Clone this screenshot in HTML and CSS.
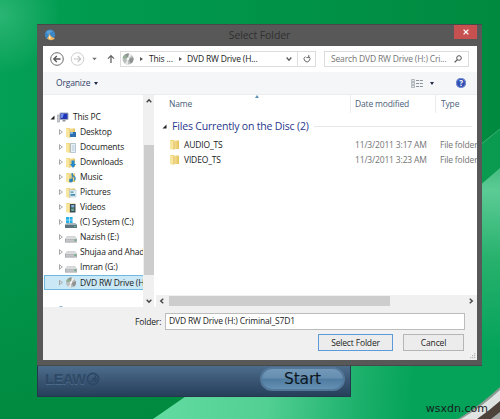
FILE: index.html
```
<!DOCTYPE html>
<html lang="en">
<head>
    <meta charset="UTF-8">
    <meta name="viewport" content="width=device-width, initial-scale=1.0">
    <title>Select Folder</title>
    <link rel="stylesheet" href="styles.css">
</head>
<body>
    <svg class="wallpaper" viewBox="0 0 500 419">
        <defs>
            <linearGradient id="base" x1="0" y1="0" x2="1" y2="0">
                <stop offset="0" stop-color="#04a055"/>
                <stop offset=".2" stop-color="#009a4e"/>
                <stop offset="1" stop-color="#008a40"/>
            </linearGradient>
            <linearGradient id="fold" gradientUnits="userSpaceOnUse" x1="150" y1="400" x2="410" y2="419">
                <stop offset="0" stop-color="#63dca2"/>
                <stop offset=".45" stop-color="#52cf92"/>
                <stop offset=".8" stop-color="#1cb06b"/>
                <stop offset="1" stop-color="#05a35a"/>
            </linearGradient>
            <linearGradient id="side" gradientUnits="userSpaceOnUse" x1="0" y1="168" x2="0" y2="350">
                <stop offset="0" stop-color="#45bc80"/>
                <stop offset=".12" stop-color="#5ccb95"/>
                <stop offset=".5" stop-color="#27b16d"/>
                <stop offset="1" stop-color="#05a35a"/>
            </linearGradient>
            <radialGradient id="corner" gradientUnits="userSpaceOnUse" cx="0" cy="15" r="60">
                <stop offset="0" stop-color="#2ab473"/>
                <stop offset="1" stop-color="#2ab473" stop-opacity="0"/>
            </radialGradient>
            <linearGradient id="dark" x1="0" y1="0" x2="0" y2="1">
                <stop offset=".3" stop-color="#008a40" stop-opacity="0"/>
                <stop offset="1" stop-color="#008a40"/>
            </linearGradient>
        </defs>
        <rect width="500" height="419" fill="url(#base)"/>
        <rect width="250" height="419" fill="url(#dark)"/>
        <rect width="80" height="80" fill="url(#corner)"/>
        <path d="M153 419L192 392 340 300H500V419z" fill="url(#fold)"/>
        <path d="M470 153L500 129V200H470z" fill="#0a9a50"/>
        <path d="M480 145L500 129" stroke="#3fae75"/>
        <path d="M470 194L500 168V350H470z" fill="url(#side)"/>
        <path d="M458 419Q482 404 500 387V419z" fill="#8d9a94"/>
        <path d="M461 419Q483 406 500 390V419z" fill="#dfe4e3"/>
        <path d="M477 419Q490 410 500 401V419z" fill="#4d433a"/>
        <path d="M491 419L500 412V419z" fill="#a5aaa8"/>
    </svg>

    <div class="desktop">
        <div class="window">
            <div class="titlebar">
                <svg class="app-icon" viewBox="0 0 12 12">
                    <circle cx="6" cy="5.6" r="5.2" fill="#3d86c6"/>
                    <path d="M2 3Q5 0 9 2 6 3 5 6z" fill="#5a9fd6"/>
                    <path d="M3 9.500Q5 8 5 5l3 3 3 1.500Q7 13 3 9.500z" fill="#f3b45a"/>
                    <path d="M5 6l2 3-2 1z" fill="#fff0cf"/>
                </svg>
                <span class="title">Select Folder</span>
                <div class="close">
                    <svg viewBox="0 0 6 6"><path d="M.6.6l4.800 4.800M5.400.6L.6 5.400" stroke="#fff" stroke-width="1.300"/></svg>
                </div>
            </div>

            <div class="content">
                <div class="address-row">
                    <svg class="nav" viewBox="0 0 70 16">
                        <g fill="none">
                            <circle cx="7" cy="8" r="6.300" stroke="#6c6c6c"/>
                            <path d="M10.500 8H4M6.800 5L3.800 8l3 3" stroke="#555" stroke-width="1.300"/>
                            <circle cx="27.500" cy="8" r="6.300" stroke="#cfcfcf"/>
                            <path d="M24 8h6.500M27.700 5l3 3-3 3" stroke="#c4c4c4" stroke-width="1.200"/>
                            <path d="M61 12V5M58 7.600L61 4.600l3 3" stroke="#666" stroke-width="1.300"/>
                        </g>
                        <path d="M42.200 6.700h4.600L44.500 9.200z" fill="#707070"/>
                    </svg>
                    <div class="address">
                        <svg class="disc" viewBox="0 0 12 12"><use href="#icon-disc"/></svg>
                        <i class="crumb"></i>
                        <span class="crumb-this">This ...</span>
                        <i class="crumb"></i>
                        <span class="crumb-drive">DVD RW Drive (H...</span>
                        <svg class="drop" viewBox="0 0 6 6"><path d="M.7 1.500L3 4.300 5.300 1.500" fill="none" stroke="#555" stroke-width="1.300"/></svg>
                        <div class="refresh">
                            <svg viewBox="0 0 8 8"><path d="M5.600 1.500A2.900 2.900 0 1 1 2.300 1.600M5.800 0v2.600H3.400" fill="none" stroke="#666"/></svg>
                        </div>
                    </div>
                    <div class="search">
                        <span>Search DVD RW Drive (H:) Cri...</span>
                        <svg viewBox="0 0 8 8"><circle cx="5" cy="3" r="2.300" fill="none" stroke="#555"/><path d="M3.400 4.600L.6 7.400" stroke="#555" stroke-width="1.300"/></svg>
                    </div>
                </div>

                <div class="toolbar">
                    <span class="organize">Organize</span>
                    <i class="caret"></i>
                    <svg class="view-icon" viewBox="0 0 12 9">
                        <path d="M.5.5h3v2h-3zM.5 3.500h3v2h-3zM.5 6.500h3v2h-3z" fill="#e4e7ec" stroke="#9ba1ab" stroke-width=".7"/>
                        <path d="M5 1.500h7M5 4.500h7M5 7.500h7" stroke="#8c929c" stroke-dasharray="3 .8"/>
                    </svg>
                    <i class="caret"></i>
                    <span class="help">?</span>
                </div>

                <div class="panes">
                    <div class="tree">
                        <ul>
                            <li class="root">
                                <svg class="open" viewBox="0 0 5 5"><path d="M4.500.5v4H.5z" fill="#222"/></svg>
                                <svg class="icon" viewBox="0 0 12 11"><path d="M0 3h2.500v7H0z" fill="#c9ccd1" stroke="#8a8e96" stroke-width=".5"/><path d="M3 1h8v6.500H3z" fill="#1f35b5" stroke="#a3a9bb"/><path d="M4 2l3-.5L5.500 6H4z" fill="#6f8cf0"/><path d="M5.500 8h3v1.500h-3z" fill="#8d929c"/></svg>
                                <span>This PC</span>
                            </li>
                            <li><i class="closed"></i><svg class="icon" viewBox="0 0 12 11"><use href="#icon-folder"/><path d="M5 5h6v5H5z" fill="#2e6fb0"/><path d="M5 5h3v2H5z" fill="#7eb3dd"/></svg><span>Desktop</span></li>
                            <li><i class="closed"></i><svg class="icon" viewBox="0 0 12 11"><use href="#icon-folder"/><path d="M5.500 1.500h5v9h-5z" fill="#e9f1f7" stroke="#91a8b9" stroke-width=".6"/><path d="M7 4h2.500M7 6h2.500M7 8h2.500" stroke="#8fabc2" stroke-width=".6"/></svg><span>Documents</span></li>
                            <li><i class="closed"></i><svg class="icon" viewBox="0 0 12 11"><use href="#icon-folder"/><path d="M6.500 3.500h3V7H11l-3 4-3-4h1.500z" fill="#2389cf"/></svg><span>Downloads</span></li>
                            <li><i class="closed"></i><svg class="icon" viewBox="0 0 12 11"><use href="#icon-folder"/><path d="M7 1.500q0 2 2 3t.5 4" fill="none" stroke="#2b83bd" stroke-width="1.200"/><circle cx="6" cy="8.500" r="1.900" fill="#2b83bd"/><path d="M7.200 1v7.500" stroke="#2b83bd"/></svg><span>Music</span></li>
                            <li><i class="closed"></i><svg class="icon" viewBox="0 0 12 11"><use href="#icon-folder"/><path d="M4.500 3h6.500v7H4.500z" fill="#e1f0f7" stroke="#9db7c4" stroke-width=".5"/><path d="M5.500 4.500h3v1.300h-3zM5.500 7h4.500v1.800H5.500z" fill="#448ba8"/></svg><span>Pictures</span></li>
                            <li><i class="closed"></i><svg class="icon" viewBox="0 0 12 11"><use href="#icon-folder"/><path d="M5 2h5.500v8.500H5z" fill="#3a4a55"/><path d="M6.200 3h3v2.500h-3z" fill="#7fb5d6"/><path d="M6.200 6.500h3V9h-3z" fill="#69a58f"/></svg><span>Videos</span></li>
                            <li><i class="closed"></i><svg class="icon" viewBox="0 0 12 11"><path d="M1 0h3v2.700H1zM4.600 0h3v2.700h-3zM1 3.300h3V6H1zM4.600 3.300h3V6h-3z" fill="#22b0e6"/><path d="M1.500 6.500h9L12 8v3H0V8z" fill="#5c7480"/><path d="M1.500 6.500h9L12 8H0z" fill="#9fb1b9"/><circle cx="10" cy="9.500" r=".7" fill="#5fe08c"/></svg><span>(C) System (C:)</span></li>
                            <li><i class="closed"></i><svg class="icon" viewBox="0 0 12 11"><use href="#icon-drive"/></svg><span>Nazish (E:)</span></li>
                            <li><i class="closed"></i><svg class="icon" viewBox="0 0 12 11"><use href="#icon-drive"/></svg><span>Shujaa and Ahad</span></li>
                            <li><i class="closed"></i><svg class="icon" viewBox="0 0 12 11"><use href="#icon-drive"/></svg><span>Imran (G:)</span></li>
                            <li class="selected"><i class="closed"></i><svg class="icon" viewBox="0 0 12 12"><use href="#icon-disc"/></svg><span>DVD RW Drive (H</span></li>
                        </ul>
                        <svg class="network" viewBox="0 0 6 2"><path d="M0 2Q3-1.500 6 2z" fill="#3b82b5"/></svg>
                    </div>
                    <div class="vscroll">
                        <svg viewBox="0 0 6 6"><path d="M.7 4.300L3 1.700l2.300 2.600" fill="none" stroke="#444" stroke-width="1.400"/></svg>
                        <div class="thumb"></div>
                        <svg viewBox="0 0 6 6"><path d="M.7 1.700L3 4.300l2.300-2.600" fill="none" stroke="#444" stroke-width="1.400"/></svg>
                    </div>

                    <div class="files">
                        <div class="columns">
                            <span class="col-name">Name</span>
                            <span class="col-date">Date modified</span>
                            <span class="col-type">Type</span>
                            <i class="sort"></i>
                        </div>
                        <div class="group">
                            <svg class="open" viewBox="0 0 5 5"><path d="M4.500.5v4H.5z" fill="#222"/></svg>
                            <span>Files Currently on the Disc (2)</span>
                            <hr>
                        </div>
                        <div class="file">
                            <svg class="icon" viewBox="0 0 12 11"><use href="#icon-folder"/></svg>
                            <span class="file-name">AUDIO_TS</span>
                            <span class="file-date">11/3/2011 3:17 AM</span>
                            <span class="file-type">File folder</span>
                        </div>
                        <div class="file">
                            <svg class="icon" viewBox="0 0 12 11"><use href="#icon-folder"/></svg>
                            <span class="file-name">VIDEO_TS</span>
                            <span class="file-date">11/3/2011 3:23 AM</span>
                            <span class="file-type">File folder</span>
                        </div>
                        <div class="hscroll">
                            <svg viewBox="0 0 6 6"><path d="M4.300.7L1.700 3l2.600 2.300" fill="none" stroke="#444" stroke-width="1.400"/></svg>
                            <div class="thumb"></div>
                            <svg viewBox="0 0 6 6"><path d="M1.700.7L4.300 3 1.700 5.300" fill="none" stroke="#444" stroke-width="1.400"/></svg>
                        </div>
                    </div>
                </div>

                <div class="footer">
                    <div class="folder-row">
                        <span class="label">Folder:</span>
                        <div class="input">DVD RW Drive (H:) Criminal_S7D1</div>
                    </div>
                    <div class="buttons">
                        <button class="primary">Select Folder</button>
                        <button class="cancel">Cancel</button>
                    </div>
                    <svg class="grip" viewBox="0 0 6 6"><path d="M4 0h1.300v1.300H4zM2 2h1.300v1.300H2zM4 2h1.300v1.300H4zM0 4h1.300v1.300H0zM2 4h1.300v1.300H2zM4 4h1.300v1.300H4z" fill="#bbb"/></svg>
                </div>
            </div>
        </div>

        <div class="player">
            <div class="brand">
                <span>LEAW</span>
                <svg viewBox="0 0 14 14"><circle cx="7" cy="7" r="5.600" fill="none" stroke="#2b4765" stroke-width="1.600"/><path d="M4 9.500Q9 9 9.500 3.500M6 6.500h5M8 10l3-3" fill="none" stroke="#2b4765" stroke-width="1.300"/></svg>
            </div>
            <div class="start">Start</div>
        </div>
    </div>
    <span class="watermark">wsxdn.com</span>

    <svg class="defs">
        <defs>
            <linearGradient id="gold"><stop stop-color="#f9e7a2"/><stop offset="1" stop-color="#e3c05a"/></linearGradient>
            <g id="icon-folder">
                <path d="M1 1h4v9H1z" fill="#eed27b"/>
                <path d="M4.500 1.500h5.500v8.500H4.500z" fill="url(#gold)"/>
                <path d="M1 1l4 1.500v8.500l-4-1z" fill="#f8e59e"/>
                <path d="M5 2.500v8" stroke="#cfa640" stroke-width=".6"/>
            </g>
            <g id="icon-drive">
                <path d="M2 4.500h8L12 7v3.500H0V7z" fill="#999c9e"/>
                <path d="M2 4.500h8L12 7H0z" fill="#d9dbdc"/>
                <path d="M.5 7.300h11v2.500H.5z" fill="#c3c6c8"/>
                <path d="M9.500 7.500h1.300v1.500H9.500z" fill="#48a868"/>
            </g>
            <g id="icon-disc">
                <circle cx="6" cy="6" r="5.500" fill="#b9bdbb"/>
                <path d="M6 6L3 1.400A5.500 5.500 0 0 1 7 .6z" fill="#8c938e"/>
                <path d="M6 6l5.300-1.500A5.500 5.500 0 0 1 9 10.500z" fill="#8e9292"/>
                <path d="M6 6L.6 5A5.500 5.500 0 0 1 3 1.400z" fill="#8fae93"/>
                <path d="M6 6l1-5.400 3 1.600z" fill="#eef0ef"/>
                <path d="M6 6L3 10.600l3 .9z" fill="#e6e8e7"/>
                <circle cx="6" cy="6" r="1.400" fill="#f6f6f6"/>
            </g>
        </defs>
    </svg>
</body>
</html>
```

FILE: styles.css
```
* {
    box-sizing: border-box;
}
body {
    margin: 0;
    width: 500px;
    height: 419px;
    position: relative;
    overflow: hidden;
    font-family: 'Open Sans', 'Noto Sans', sans-serif;
    font-size: 8.5px;
    letter-spacing: -0.16px;
    line-height: 14px;
    color: #222;
    white-space: nowrap;
}
svg {
    display: block;
    flex: none;
}
ul {
    list-style: none;
    margin: 0;
    padding: 0;
}
.wallpaper {
    position: absolute;
    inset: 0;
    width: 500px;
    height: 419px;
}
.defs {
    position: absolute;
    width: 0;
    height: 0;
}
.desktop {
    position: relative;
    padding: 24px 18px 0 37px;
}

/* dialog */
.window {
    height: 342px;
    padding: 0 5px 5px 6px;
    background: #585858;
    border: 1px solid #484848;
    border-width: 1px 0 1px 0;
}
.titlebar {
    height: 21px;
    display: flex;
    align-items: flex-start;
}
.app-icon {
    width: 12px;
    height: 12px;
    margin: 4px 0 0 1px;
}
.title {
    flex: 1;
    margin-top: 2px;
    padding-left: 9px;
    text-align: center;
    font-size: 10.5px;
    letter-spacing: -0.1px;
    line-height: 16px;
    color: #303030;
}
.close {
    width: 23px;
    height: 14px;
    background: #c75050;
    display: flex;
    align-items: center;
    justify-content: center;
}
.close svg {
    width: 6px;
    height: 6px;
}
.content {
    height: 314px;
    background: #fff;
    overflow: hidden;
    display: flex;
    flex-direction: column;
}
.address-row {
    height: 26px;
    display: flex;
    align-items: center;
    padding-left: 7px;
}
.nav {
    width: 70px;
    height: 16px;
}
.address {
    width: 196px;
    height: 16px;
    border: 1px solid #dcdcdc;
    display: flex;
    align-items: center;
}
.disc {
    width: 12px;
    height: 12px;
    margin: 0 6px 1px 1px;
}
.crumb {
    border: 2px solid transparent;
    border-left: 3px solid #555;
    border-right: 0;
}
.crumb-this {
    width: 25px;
    margin: 0 5px 0 6px;
}
.crumb-drive {
    flex: 1;
    margin-left: 5px;
}
.drop {
    width: 6px;
    height: 6px;
    margin-right: 5px;
}
.refresh {
    width: 18px;
    height: 14px;
    border-left: 1px solid #e0e0e0;
    display: flex;
    align-items: center;
    justify-content: center;
}
.refresh svg {
    width: 8px;
    height: 8px;
}
.search {
    width: 145px;
    height: 16px;
    margin-left: 8px;
    padding: 0 6px;
    border: 1px solid #dcdcdc;
    display: flex;
    align-items: center;
    justify-content: space-between;
    color: #757575;
}
.search svg {
    width: 8px;
    height: 8px;
}
.toolbar {
    height: 23px;
    padding-left: 13px;
    background: #f5f6f7;
    border-bottom: 1px solid #ebecee;
    display: flex;
    align-items: center;
    color: #33426b;
}
.organize {
    width: 34px;
}
.caret {
    margin-left: 4px;
    border: 2.5px solid transparent;
    border-top: 3px solid #1e2c4c;
    border-bottom: 0;
}
.view-icon {
    width: 12px;
    height: 9px;
    margin-left: auto;
    margin-right: 3px;
}
.help {
    width: 10px;
    height: 10px;
    margin: 0 11px 0 22px;
    border-radius: 50%;
    background: #3150b4;
    box-shadow: inset 0 0 0 1px #7d93d4;
    color: #fff;
    font-size: 8px;
    font-weight: bold;
    line-height: 10px;
    text-align: center;
}

/* folder tree */
.panes {
    height: 212px;
    display: flex;
}
.tree {
    width: 100px;
    padding: 15px 0 0 1px;
    overflow: hidden;
}
.tree li {
    height: 15px;
    display: flex;
    align-items: center;
    padding: 0 0 1px 15px;
}
.tree .root {
    padding-left: 6px;
}
.open {
    width: 5px;
    height: 5px;
}
.icon {
    width: 12px;
    height: 11px;
    margin: 0 3px 0 2px;
}
.root .icon {
    margin-right: 4px;
}
.closed {
    flex: none;
    width: 4px;
    height: 6px;
    background: #a6a6a6;
    clip-path: polygon(0 0, 100% 50%, 0 100%, 0 0, 25% 28%, 25% 72%, 70% 50%, 25% 28%);
}
.tree .selected {
    padding: 0 0 0 14px;
    background: #cbe8f6;
    border: 1px solid #6fb9de;
    border-right: 0;
}
.network {
    width: 6px;
    height: 2px;
    margin: 16px 0 0 14px;
}
.vscroll {
    width: 11px;
    background: #f0f0f0;
    display: flex;
    flex-direction: column;
    align-items: center;
    justify-content: space-between;
    padding: 3px 0;
    margin-right: 2px;
}
.vscroll svg, .hscroll svg {
    width: 6px;
    height: 6px;
}
.vscroll .thumb {
    width: 10px;
    height: 130px;
    margin-top: 18px;
    background: #cdcdcd;
}

/* file list */
.files {
    flex: 1;
    min-width: 0;
    display: flex;
    flex-direction: column;
    overflow: hidden;
}
.columns {
    position: relative;
    height: 18px;
    display: flex;
    line-height: 18px;
    color: #4c607a;
}
.col-name {
    width: 194px;
    padding-left: 13px;
}
.col-date {
    width: 85px;
    padding-left: 4px;
    border-left: 1px solid #ececec;
}
.col-type {
    padding-left: 5px;
    border-left: 1px solid #ececec;
}
.sort {
    position: absolute;
    left: 99px;
    top: 0;
    border: 2.5px solid transparent;
    border-bottom: 3px solid #5c93b5;
    border-top: 0;
}
.group {
    height: 24px;
    margin-top: 1px;
    display: flex;
    align-items: center;
    padding-left: 6px;
    font-size: 10.5px;
    letter-spacing: -0.18px;
    color: #27388c;
}
.group span {
    width: 137px;
    margin-left: 5px;
}
.group hr {
    width: 158px;
    margin: 0 0 0 5px;
    border: 0;
    border-top: 1px solid #e8e8e8;
}
.file {
    position: relative;
    height: 15px;
    display: flex;
    align-items: center;
    padding: 0 0 2px 11px;
}
.file-name, .file-date, .file-type {
    flex: none;
}
.file-name {
    width: 171px;
}
.file-date, .file-type {
    color: #737373;
}
.file-date {
    width: 85px;
}
.hscroll {
    height: 12px;
    margin: auto 0 0;
    padding: 0 3px;
    background: #f0f0f0;
    display: flex;
    align-items: center;
}
.hscroll .thumb {
    width: 221px;
    height: 10px;
    margin: 0 auto 0 4px;
    background: #cdcdcd;
}

/* bottom of the dialog */
.footer {
    position: relative;
    flex: 1;
    padding-top: 6px;
    background: #f0f0f0;
}
.folder-row {
    display: flex;
    align-items: center;
}
.label {
    width: 122px;
    padding-left: 92px;
}
.input {
    width: 300px;
    height: 17px;
    padding-left: 3px;
    background: #fff;
    border: 1px solid #bcbcbc;
}
.buttons {
    display: flex;
    margin: 4px 0 0 275px;
    gap: 10px;
}
button {
    height: 17px;
    padding: 0;
    font: inherit;
    letter-spacing: inherit;
    color: #222;
    background: #ececec;
    border: 1px solid #b5b5b5;
}
.primary {
    width: 75px;
    border-color: #5b9bdc;
}
.cancel {
    width: 61px;
}
.grip {
    position: absolute;
    right: 1px;
    bottom: 1px;
    width: 6px;
    height: 6px;
}

/* player bar behind the dialog */
.player {
    width: 314px;
    height: 31px;
    padding: 0 5px 0 7px;
    background: linear-gradient(#4d6d8d, #3b5775 45%, #26405b);
    border: 1px solid #24374c;
    border-top: 0;
    display: flex;
    justify-content: space-between;
}
.brand {
    display: flex;
    align-items: center;
    height: 26px;
    font-family: 'Liberation Sans', sans-serif;
    font-size: 15px;
    font-weight: bold;
    color: #2e4966;
    text-shadow: 0 1px 0 #4c6987;
}
.brand span {
    width: 41px;
    letter-spacing: -0.7px;
}
.brand svg {
    width: 14px;
    height: 14px;
}
.start {
    width: 85px;
    height: 24px;
    margin-top: 1px;
    border: 2px solid #527798;
    border-radius: 12px;
    background: linear-gradient(#7399b8, #668eb0 45%, #4f7ba1 50%, #6490b4);
    font-family: 'DejaVu Sans', sans-serif;
    font-size: 15.5px;
    letter-spacing: -0.2px;
    line-height: 20px;
    text-align: center;
    color: #0d1722;
}
.watermark {
    position: absolute;
    right: 12px;
    bottom: 2px;
    font-family: 'DejaVu Sans', sans-serif;
    font-size: 11px;
    letter-spacing: 0;
    line-height: 16px;
    color: #16221c;
}
```
